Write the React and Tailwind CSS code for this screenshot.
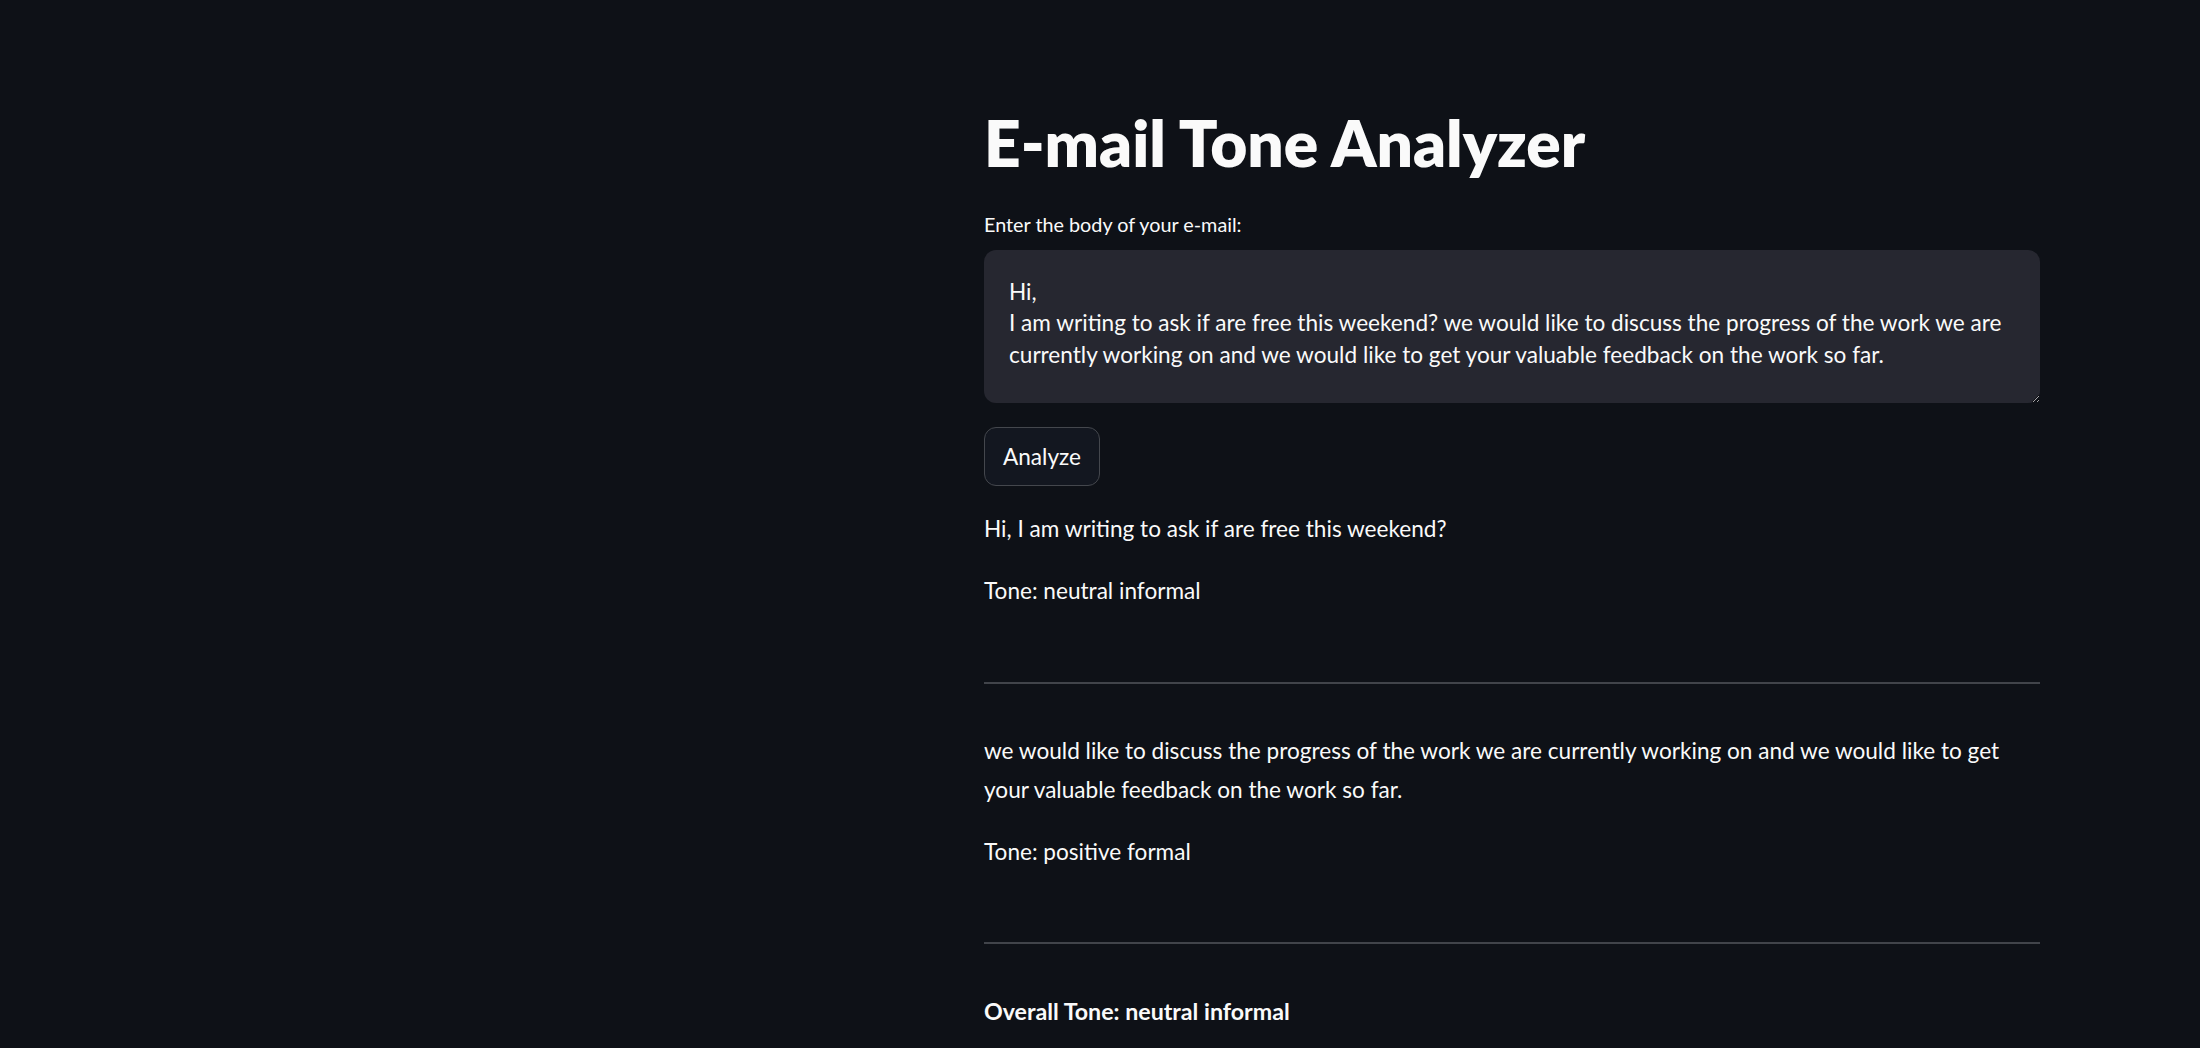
import React from "react";

const emailBody =
  "Hi,\nI am writing to ask if are free this weekend? we would like to discuss the progress of the work we are currently working on and we would like to get your valuable feedback on the work so far.";

function Divider({ className }) {
  return <div className={`h-[2px] w-full bg-[#41444a] ${className}`} />;
}

export default function App() {
  return (
    <div className="min-h-screen bg-[#0e1117] font-['Lato',sans-serif] text-[#fafafa]">
      <main className="ml-[984px] flex w-[1056px] flex-col pt-[105px] pb-[40px]">
        <h1 className="text-[64px] font-extrabold leading-[76.8px]">E-mail Tone Analyzer</h1>

        <label htmlFor="email-body" className="mt-[27.6px] block text-[19.8px] leading-[30px]">
          Enter the body of your e-mail:
        </label>
        <textarea
          id="email-body"
          readOnly
          value={emailBody}
          className="mt-[10.6px] block h-[153px] w-full resize-y overflow-hidden rounded-[12px] border-0 bg-[#262730] px-[25px] pt-[26px] pb-0 text-[22.6px] leading-[31.5px] text-[#fafafa] outline-none [color-scheme:dark]"
        />

        <div className="mt-[24px]">
          <button
            type="button"
            className="flex h-[59px] w-[116px] items-center justify-center rounded-[12px] border-[1.5px] border-[#44474d] bg-[#131720] pt-[2px] text-[22.6px] leading-[32px] text-[#fafafa]"
          >
            Analyze
          </button>
        </div>

        <p className="mt-[24px] text-[22.6px] leading-[38.4px]">Hi, I am writing to ask if are free this weekend?</p>
        <p className="mt-[24px] text-[22.6px] leading-[38.4px]">Tone: neutral informal</p>

        <Divider className="mt-[71.5px]" />

        <p className="mt-[48px] text-[22.6px] leading-[38.4px]">
          we would like to discuss the progress of the work we are currently working on and we would like to get
          <br />
          your valuable feedback on the work so far.
        </p>
        <p className="mt-[24px] text-[22.6px] leading-[38.4px]">Tone: positive formal</p>

        <Divider className="mt-[70.5px]" />

        <p className="mt-[48px] text-[23.2px] font-bold leading-[38.4px]">Overall Tone: neutral informal</p>
      </main>
    </div>
  );
}
